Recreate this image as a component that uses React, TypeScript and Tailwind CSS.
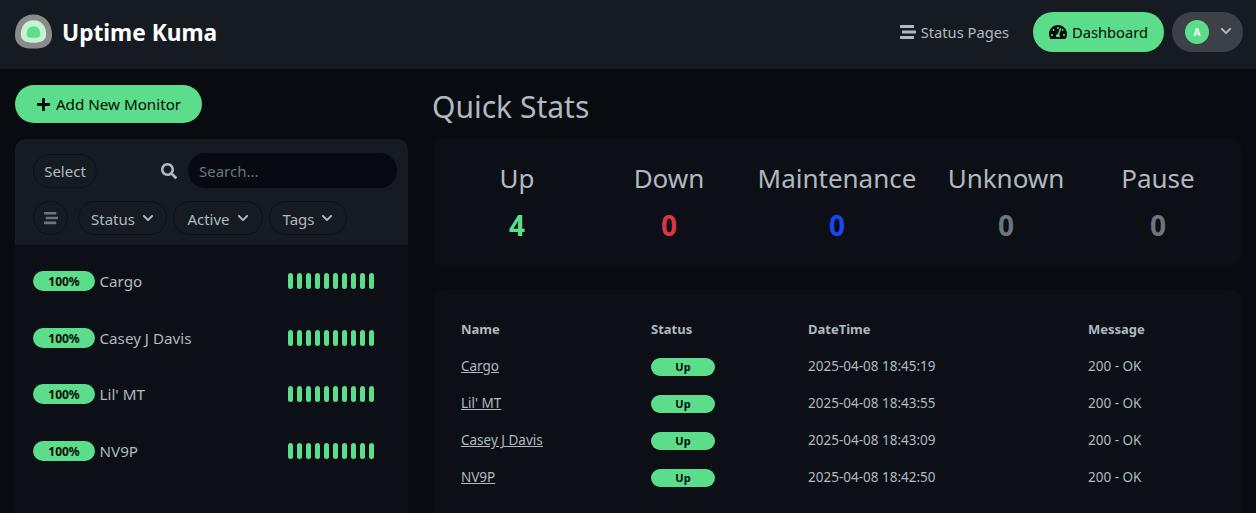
import React from 'react';
import { FaChevronDown, FaPlus, FaSearch, FaStream, FaTachometerAlt } from 'react-icons/fa';

const font = 'font-["Noto_Sans",sans-serif]';

const monitors = ['Cargo', 'Casey J Davis', "Lil' MT", 'NV9P'];

const stats = [
  { label: 'Up', value: '4', color: 'text-[#5cdd8b]', width: 'w-[168px]' },
  { label: 'Down', value: '0', color: 'text-[#dc3545]', width: 'w-[136px]' },
  { label: 'Maintenance', value: '0', color: 'text-[#1747f5]', width: 'w-[200px]' },
  { label: 'Unknown', value: '0', color: 'text-[#6c757d]', width: 'w-[138px]' },
  { label: 'Pause', value: '0', color: 'text-[#6c757d]', width: 'w-[166px]' },
];

const events = [
  { name: 'Cargo', time: '2025-04-08 18:45:19' },
  { name: "Lil' MT", time: '2025-04-08 18:43:55' },
  { name: 'Casey J Davis', time: '2025-04-08 18:43:09' },
  { name: 'NV9P', time: '2025-04-08 18:42:50' },
];

const Logo = () => (
  <svg width="39" height="36" viewBox="0 0 40 36" className="shrink-0">
    <path d="M20 0C31 0 39 8 39 21C39 31 32 35 20 35C8 35 1 31 1 21C1 8 9 0 20 0Z" fill="#8a8a8a" />
    <path d="M20 6C28 6 33 12 33 20C33 27 28 29 20 29C12 29 7 27 7 20C7 12 12 6 20 6Z" fill="#c4f2d2" />
    <path d="M20 12C25 12 27 16 27 21C27 23 24 24 20 24C16 24 13 23 13 21C13 16 15 12 20 12Z" fill="#5cdd8b" />
  </svg>
);

const FilterPill = ({ label, width }: { label: string; width: string }) => (
  <button className={`${width} flex h-[34px] items-center justify-center gap-[7px] rounded-full border border-[#0c1016] text-[15px] text-[#b1b8c0]`}>
    <span className="pt-[2px]">{label}</span>
    <FaChevronDown className="text-[12px]" />
  </button>
);

const Beats = () => (
  <div className="flex gap-[3.5px]">
    {Array.from({ length: 10 }).map((_, i) => (
      <div key={i} className="h-[16px] w-[5.5px] rounded-full bg-[#5cdd8b]" />
    ))}
  </div>
);

export default function App() {
  return (
    <div className={`${font} h-[513px] w-[1256px] overflow-hidden bg-[#080b0f] text-[#b1b8c0]`}>
      {/* Header */}
      <header className="flex h-[69px] items-center justify-between bg-[#161b22] pb-[5px] pl-[14px] pr-[13px]">
        <div className="flex items-center gap-[9px]">
          <Logo />
          <span className="pt-[3px] text-[22.7px] font-bold leading-none text-white">Uptime Kuma</span>
        </div>
        <div className="flex items-center">
          <a className="mr-[24px] flex items-center gap-[5px] text-[14.7px]">
            <FaStream className="text-[16px]" />
            <span className="pt-[1px]">Status Pages</span>
          </a>
          <a className="mr-[8px] flex h-[40px] w-[131px] items-center justify-center gap-[5px] rounded-full bg-[#5cdd8b] text-[14.7px] text-[#020b05]">
            <FaTachometerAlt className="text-[18px]" />
            <span className="pt-[1px]">Dashboard</span>
          </a>
          <div className="flex h-[40px] w-[71px] items-center gap-[11px] rounded-full bg-[#3c4147] pl-[13px]">
            <div className="flex h-[24px] w-[24px] items-center justify-center rounded-full bg-[#5cdd8b] text-[10px] font-bold text-white">A</div>
            <FaChevronDown className="mb-[2px] text-[12px]" />
          </div>
        </div>
      </header>

      <div className="flex gap-[25px] pl-[15px] pr-[15px] pt-[16px]">
        {/* Left column */}
        <div className="w-[393px] shrink-0">
          <button className="flex h-[38px] w-[187px] items-center justify-center gap-[5px] rounded-full bg-[#5cdd8b] pt-[1px] text-[15.2px] text-[#020b05]">
            <FaPlus className="text-[15px]" />
            Add New Monitor
          </button>
          <div className="mt-[16px] h-[400px] overflow-hidden rounded-[10px] bg-[#0c1016]">
            <div className="h-[106px] rounded-t-[10px] bg-[#161b22] pl-[18px] pr-[10px] pt-[13px]">
              <div className="flex items-center justify-between">
                <button className="flex h-[34px] w-[64px] items-center justify-center rounded-full border border-[#0c1016] pt-[1px] text-[15px]">Select</button>
                <div className="flex items-center gap-[10px]">
                  <FaSearch className="text-[16px]" />
                  <div className="flex h-[37px] w-[211px] items-center rounded-full border border-[#161b22] bg-[#070a10] pl-[11px] pt-[1px] text-[15px] text-[#6c757d]">Search...</div>
                </div>
              </div>
              <div className="mt-[12px] flex items-center gap-[6px]">
                <div className="mr-[4px] flex h-[34px] w-[35px] items-center justify-center rounded-full border border-[#0c1016]">
                  <FaStream className="text-[14px] text-[#6c757d]" />
                </div>
                <FilterPill label="Status" width="w-[89px]" />
                <FilterPill label="Active" width="w-[90px]" />
                <FilterPill label="Tags" width="w-[78px]" />
              </div>
            </div>
            <div className="flex flex-col pl-[18px] pr-[34px] pt-[8px]">
              {monitors.map(name => (
                <div key={name} className="flex h-[56.5px] items-center justify-between">
                  <div className="flex items-center gap-[4.5px]">
                    <span className="flex h-[20px] w-[62px] items-center justify-center rounded-full bg-[#5cdd8b] pt-[2px] text-[12px] font-bold text-[#020b05]">100%</span>
                    <span className="pt-[1px] text-[15.2px]">{name}</span>
                  </div>
                  <Beats />
                </div>
              ))}
            </div>
          </div>
        </div>

        {/* Right column */}
        <div className="flex-1">
          <h1 className="-ml-[1px] text-[30px] font-normal leading-[44px]">Quick Stats</h1>
          <div className="mt-[10px] flex h-[127px] rounded-[10px] bg-[#0c1016] pt-[19px]">
            {stats.map(s => (
              <div key={s.label} className={`${s.width} text-center`}>
                <div className="text-[26px] leading-[40px]">{s.label}</div>
                <div className={`${s.color} text-[28px] font-bold leading-[54px]`}>{s.value}</div>
              </div>
            ))}
          </div>
          <div className="mt-[24px] h-[300px] rounded-[10px] bg-[#0c1016] pl-[28px] pt-[21px] text-[13.5px]">
            <table className="w-[780px] table-fixed border-collapse text-left">
              <thead>
                <tr className="h-[37px] text-[13px]">
                  <th className="w-[190px] font-bold">Name</th>
                  <th className="w-[157px] font-bold">Status</th>
                  <th className="w-[280px] font-bold">DateTime</th>
                  <th className="font-bold">Message</th>
                </tr>
              </thead>
              <tbody>
                {events.map(e => (
                  <tr key={e.name} className="h-[37px]">
                    <td><a className="underline">{e.name}</a></td>
                    <td>
                      <span className="flex h-[18px] w-[64px] items-center justify-center rounded-full bg-[#5cdd8b] pt-[1px] text-[11px] font-bold text-[#020b05]">Up</span>
                    </td>
                    <td>{e.time}</td>
                    <td>200 - OK</td>
                  </tr>
                ))}
              </tbody>
            </table>
          </div>
        </div>
      </div>
    </div>
  );
}
